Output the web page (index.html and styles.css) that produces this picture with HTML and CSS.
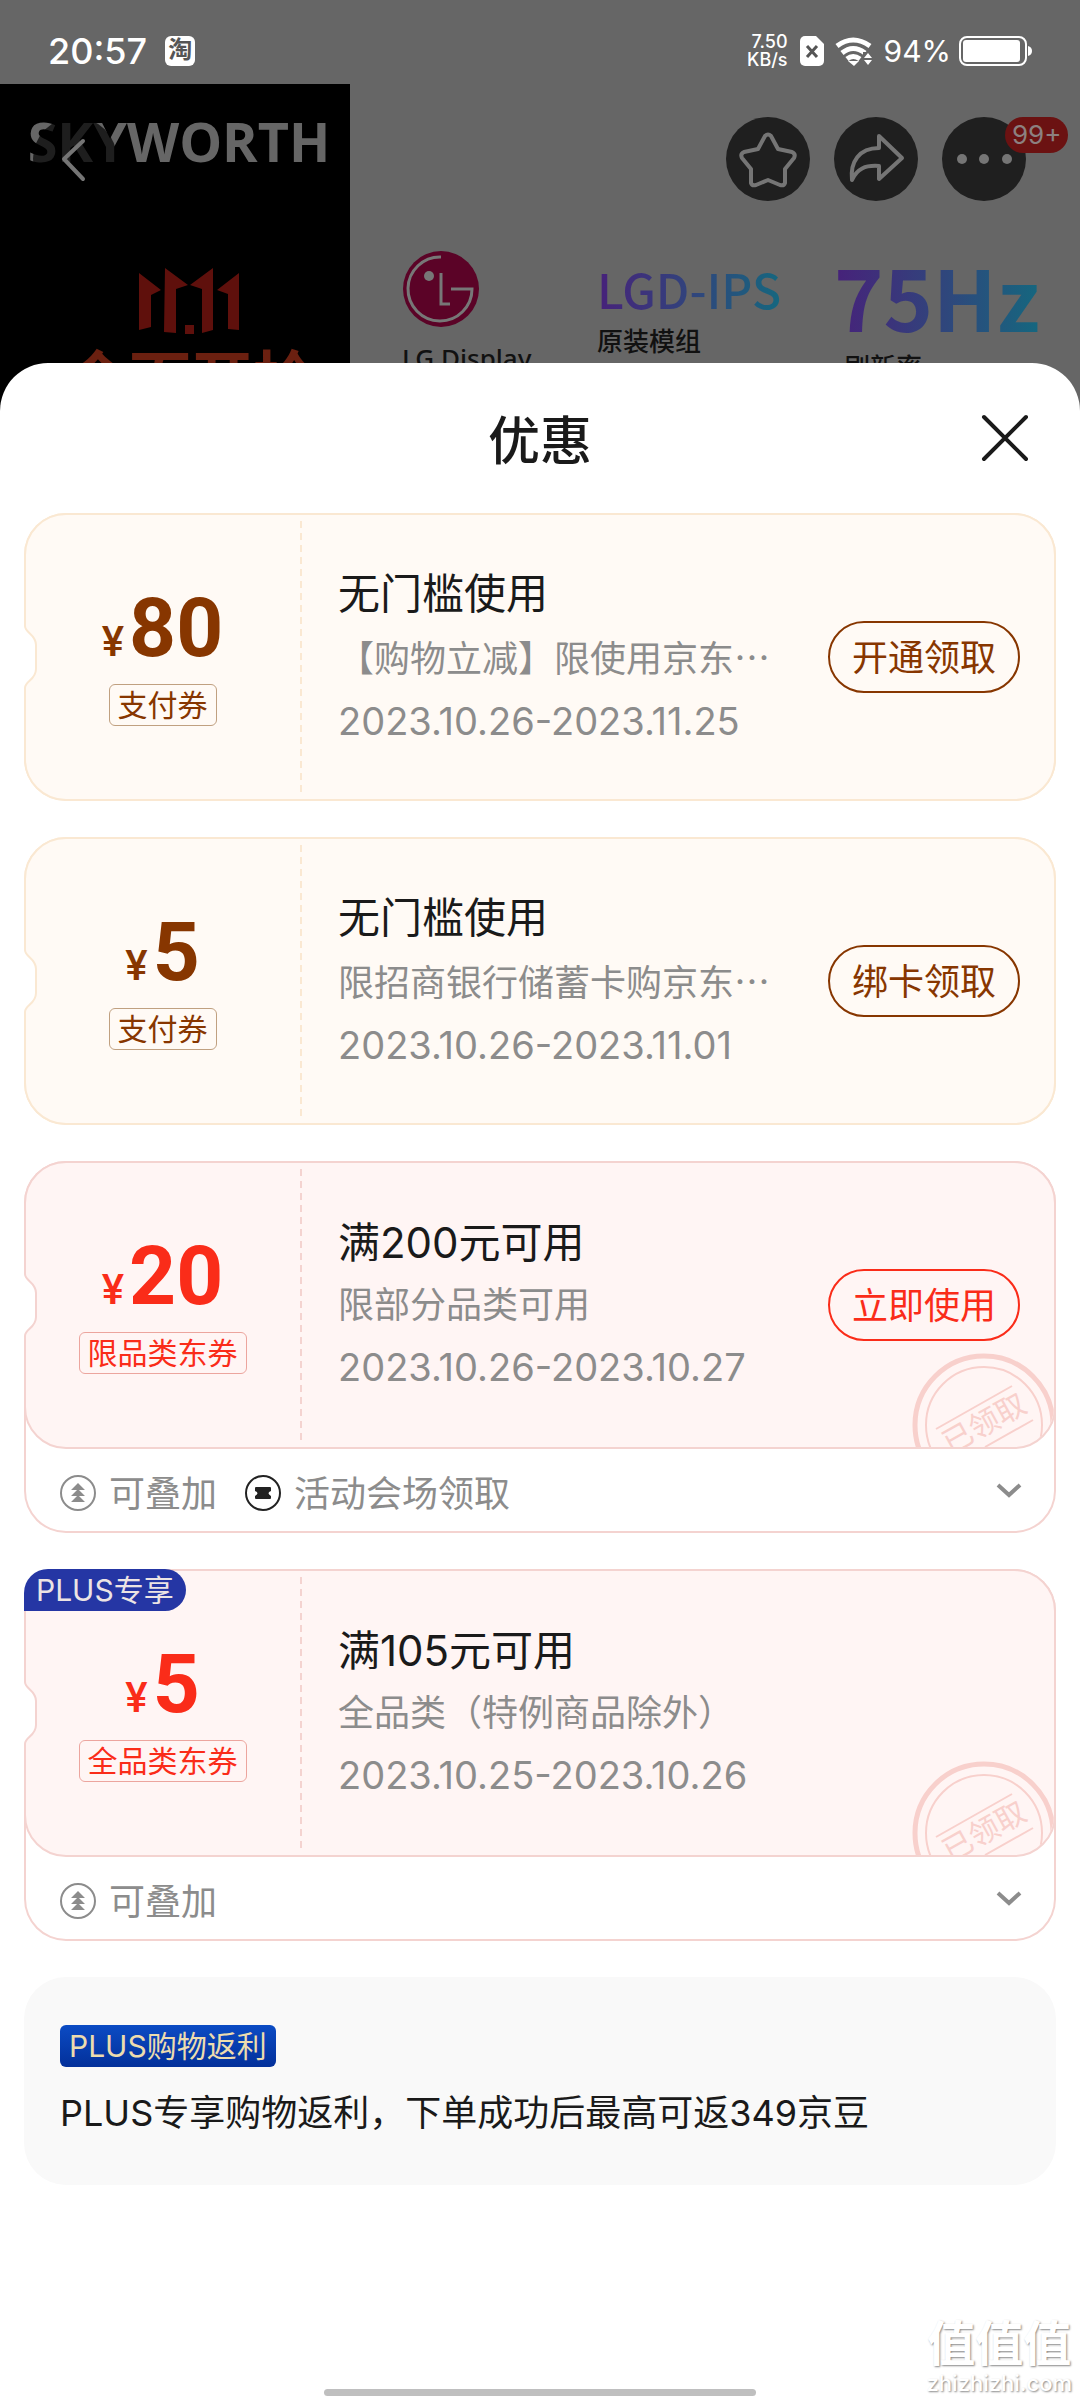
FILE: index.html
```html
<!DOCTYPE html>
<html lang="zh-CN">
<head>
<meta charset="utf-8">
<meta name="viewport" content="width=device-width, initial-scale=1">
<title>优惠</title>
<link rel="stylesheet" href="styles.css">
</head>
<body>
<svg class="defs" width="0" height="0" aria-hidden="true">
  <symbol id="notch" viewBox="0 0 14 62">
    <path d="M-2 0 L1 0 C1 7 12 8 12 19 V43 C12 54 1 55 1 62 L-2 62Z" fill="#fff"/>
    <path d="M1 0 C1 7 12 8 12 19 V43 C12 54 1 55 1 62" fill="none" stroke="currentColor" stroke-width="2"/>
  </symbol>
  <symbol id="stack" viewBox="0 0 36 36">
    <circle cx="18" cy="18" r="17" fill="none" stroke="currentColor" stroke-width="2"/>
    <path d="M18 8l7 7H11zM18 14l7 7H11zM18 20l7 7H11z" fill="currentColor"/>
  </symbol>
  <symbol id="chevron" viewBox="0 0 26 16">
    <path d="M2 2l11 10 11-10" fill="none" stroke="currentColor" stroke-width="4"/>
  </symbol>
  <symbol id="stamp" viewBox="0 0 144 94">
    <circle cx="72" cy="72" r="69" fill="none" stroke="currentColor" stroke-width="5"/>
    <circle cx="72" cy="72" r="58" fill="none" stroke="currentColor" stroke-width="2"/>
    <path d="M24 76L100 33M73 94L121 67" stroke="currentColor" stroke-width="2"/>
    <text x="-45" y="11" transform="translate(72 70) rotate(-29)" font-size="30" fill="currentColor">已领取</text>
  </symbol>
</svg>

<header class="hero">
  <div class="status">
    <time class="clock">20:57</time>
    <span class="app">淘</span>
    <span class="speed">7.50<br>KB/s</span>
    <svg class="sim" width="24" height="30" viewBox="0 0 24 30"><path d="M5 0h11l8 8v17a5 5 0 0 1-5 5H5a5 5 0 0 1-5-5V5a5 5 0 0 1 5-5z" fill="#fff"/><path d="M7 10l10 11M17 10L7 21" stroke="#555" stroke-width="3"/></svg>
    <svg class="wifi" width="38" height="30" viewBox="0 0 38 30"><g fill="none" stroke="#fff" stroke-width="5"><path d="M2 10Q18-2 35 10"/><path d="M7 17Q18 8 30 17"/><path d="M12 23Q18 18 25 23"/></g><path d="M13 25h11l-5 5z" fill="#fff"/><path d="M28 16h9v14h-9z" fill="#666"/><path d="M29 22l4-5 4 5zM29 24h8l-4 5z" fill="#fff"/></svg>
    <span class="percent">94%</span>
    <svg width="73" height="30" viewBox="0 0 73 30"><rect x="1" y="1" width="66" height="28" rx="7" fill="none" stroke="#fff" stroke-width="2"/><rect x="4" y="4" width="57" height="22" rx="3" fill="#fff"/><path d="M69 10q4 1 4 5t-4 5z" fill="#fff"/></svg>
  </div>
  <div class="banner">
    <div class="brand">
      <div class="brand-name">SKYWORTH</div>
      <svg class="sale-logo" width="102" height="68" viewBox="0 0 102 68" fill="#5f100c"><path d="M1 5L23 22 13 27V59L1 62ZM27 0L50 17 38 21V65L26 64ZM75 0L52 17 64 21V65L75 62ZM101 5L79 22 90 26V61L101 62ZM47 57h9v9h-9z"/></svg>
      <div class="sale-text">全面开抢</div>
    </div>
    <div class="feature feature-lg">
      <svg width="78" height="78" viewBox="0 0 78 78"><circle cx="39" cy="39" r="38" fill="#5b0327"/><path d="M39 7A32 32 0 1 0 70 39H49M39 23V54H48" fill="none" stroke="#777" stroke-width="3"/><circle cx="27" cy="26" r="5" fill="#777"/></svg>
      <div class="lg-name">LG Display</div>
    </div>
    <div class="feature feature-panel">
      <div class="panel-type">LGD-IPS</div>
      <div class="caption">原装模组</div>
    </div>
    <div class="feature feature-rate">
      <div class="rate">75Hz</div>
      <div class="caption">刷新率</div>
    </div>
  </div>
  <nav class="tools">
    <button class="round back" aria-label="返回"><svg width="84" height="84" viewBox="0 0 84 84"><path d="M50 24L31 42l19 20"/></svg></button>
    <button class="round" aria-label="收藏"><svg width="84" height="84" viewBox="0 0 84 84"><path d="M39 19q3-3 6 0l7 13 14 3q4 2 2 6l-9 11 0 14q-1 3-5 2l-12-5-12 5q-4 1-5-2l0-14-9-11q-2-4 2-6l14-3z"/></svg></button>
    <button class="round" aria-label="分享"><svg width="84" height="84" viewBox="0 0 84 84"><path d="M45 19L68 41 45 62V49C31 48 23 52 18 63C16 45 25 31 45 31Z"/></svg></button>
    <button class="round more" aria-label="更多"><svg width="84" height="84" viewBox="0 0 84 84"><g class="dots"><circle cx="20" cy="42" r="5"/><circle cx="42" cy="42" r="5"/><circle cx="65" cy="42" r="5"/></g></svg><span class="badge">99+</span></button>
  </nav>
</header>

<main class="sheet">
  <div class="sheet-head">
    <h1>优惠</h1>
    <button class="close" aria-label="关闭"><svg width="48" height="48" viewBox="0 0 48 48"><path d="M3 3l42 42M45 3L3 45" stroke="#1a1a1a" stroke-width="4" stroke-linecap="round"/></svg></button>
  </div>

  <section class="coupons">
    <article class="coupon pay">
      <div class="ticket">
        <div class="value"><p class="amount"><span>¥</span>80</p><span class="tag">支付券</span></div>
        <div class="info"><h2>无门槛使用</h2><p>【购物立减】限使用京东<span class="dotted">…</span></p><p class="dates">2023.10.26-2023.11.25</p></div>
        <button class="action">开通领取</button>
      </div>
      <svg class="notch" width="14" height="62"><use href="#notch"/></svg>
    </article>

    <article class="coupon pay">
      <div class="ticket">
        <div class="value"><p class="amount"><span>¥</span>5</p><span class="tag">支付券</span></div>
        <div class="info"><h2>无门槛使用</h2><p>限招商银行储蓄卡购京东<span class="dotted">…</span></p><p class="dates">2023.10.26-2023.11.01</p></div>
        <button class="action">绑卡领取</button>
      </div>
      <svg class="notch" width="14" height="62"><use href="#notch"/></svg>
    </article>

    <article class="coupon">
      <div class="ticket">
        <div class="value"><p class="amount"><span>¥</span>20</p><span class="tag">限品类东券</span></div>
        <div class="info"><h2>满200元可用</h2><p>限部分品类可用</p><p class="dates">2023.10.26-2023.10.27</p></div>
        <button class="action">立即使用</button>
        <svg class="stamp" width="144" height="94"><use href="#stamp"/></svg>
      </div>
      <div class="notes">
        <svg width="36" height="36"><use href="#stack"/></svg><span>可叠加</span>
        <svg class="venue" width="36" height="36" viewBox="0 0 36 36"><circle cx="18" cy="18" r="17" fill="none" stroke="#222" stroke-width="2"/><path d="M11 12h14q1 0 1 1v3q-5 2 0 5v2q0 1-1 1H11q-1 0-1-1v-2q5-3 0-5v-3q0-1 1-1z" fill="#222"/></svg><span>活动会场领取</span>
        <button class="expand" aria-label="展开"><svg width="26" height="16"><use href="#chevron"/></svg></button>
      </div>
      <svg class="notch" width="14" height="62"><use href="#notch"/></svg>
    </article>

    <article class="coupon">
      <div class="ticket">
        <div class="value"><p class="amount"><span>¥</span>5</p><span class="tag">全品类东券</span></div>
        <div class="info"><h2>满105元可用</h2><p>全品类（特例商品除外）</p><p class="dates">2023.10.25-2023.10.26</p></div>
        <svg class="stamp" width="144" height="94"><use href="#stamp"/></svg>
      </div>
      <div class="notes">
        <svg width="36" height="36"><use href="#stack"/></svg><span>可叠加</span>
        <button class="expand" aria-label="展开"><svg width="26" height="16"><use href="#chevron"/></svg></button>
      </div>
      <svg class="notch" width="14" height="62"><use href="#notch"/></svg>
      <span class="plus-flag">PLUS专享</span>
    </article>

    <article class="rebate">
      <span class="rebate-tag">PLUS购物返利</span>
      <p>PLUS专享购物返利，下单成功后最高可返349京豆</p>
    </article>
  </section>

  <div class="watermark"><strong>值值值</strong><span>zhizhizhi.com</span></div>
  <div class="home-bar"></div>
</main>
</body>
</html>
```
FILE: styles.css
```css
* { box-sizing: border-box; }
body {
  margin: 0;
  min-height: 100vh;
  display: flex;
  flex-direction: column;
  background: #fff;
  color: #1a1a1a;
  font-family: Inter, "Noto Sans CJK SC", sans-serif;
  font-size: 36px;
}
h1, h2, p { margin: 0; font-weight: 400; }
button { font: inherit; color: inherit; background: none; border: 0; padding: 0; }
svg { display: block; flex: none; }
.defs { position: absolute; }

/* Dimmed product page behind the sheet */
.hero {
  position: relative;
  height: 412px;
  overflow: hidden;
  background: #666;
}
.status {
  height: 84px;
  padding: 18px 48px 0;
  display: flex;
  align-items: center;
  color: #fff;
}
.clock { font-size: 36px; font-weight: 500; }
.app {
  width: 30px;
  height: 30px;
  margin: 0 auto 0 18px;
  border-radius: 6px;
  background: #fff;
  color: #555;
  font-size: 24px;
  font-weight: 700;
  line-height: 28px;
  text-align: center;
}
.speed { font-size: 18px; font-weight: 500; line-height: 18px; text-align: right; }
.sim { margin-left: 12px; }
.wifi { margin-left: 11px; }
.percent { margin: 0 8px 0 11px; font-size: 30px; line-height: 30px; }

.banner {
  height: 328px;
  display: grid;
  grid-template-columns: 350fr 247fr 237fr 246fr;
}
.brand {
  padding-top: 17px;
  display: flex;
  flex-direction: column;
  align-items: center;
  background: #000;
}
.brand-name {
  padding-left: 8px;
  color: #666;
  font: 700 54px/80px "Open Sans", sans-serif;
}
.sale-logo { margin: 87px 0 0 28px; }
.sale-text {
  padding-left: 32px;
  color: #6b2010;
  font: 700 62px/80px "Noto Sans CJK SC", sans-serif;
}
.feature { font-family: "Noto Sans CJK SC", sans-serif; color: #111; }
.feature-lg { padding: 166px 0 0 52px; }
.lg-name { margin-top: 8px; font: 500 26px/44px "Noto Sans", sans-serif; white-space: nowrap; }
.panel-type, .rate {
  width: max-content;
  background: linear-gradient(90deg, #47217a, #2f477c 55%, #15677f);
  background-clip: text;
  -webkit-background-clip: text;
  color: transparent;
}
.feature-panel { padding-top: 174px; }
.panel-type { font-size: 48px; font-weight: 500; line-height: 60px; }
.feature-rate { padding-top: 172px; }
.rate { font-size: 84px; font-weight: 700; line-height: 80px; }
.caption { font-size: 26px; font-weight: 500; line-height: 44px; }
.feature-rate .caption { padding: 8px 0 0 10px; }
.tools {
  position: absolute;
  top: 117px;
  left: 33px;
  right: 54px;
  display: flex;
  gap: 24px;
}
.round {
  position: relative;
  width: 84px;
  height: 84px;
  border-radius: 50%;
  background: #1f1f1f;
}
.round svg { fill: none; stroke: #757575; stroke-width: 4; stroke-linejoin: round; stroke-linecap: round; }
.round .dots { fill: #757575; stroke: none; }
.back { margin-right: auto; background: rgba(0, 0, 0, .7); }
.badge {
  position: absolute;
  left: 63px;
  top: 0;
  padding: 0 7px;
  border-radius: 18px;
  background: #6b1212;
  color: #8c8080;
  font-size: 26px;
  line-height: 36px;
}

/* Sheet */
.sheet {
  position: relative;
  flex: 1;
  margin-top: -49px;
  padding: 0 24px;
  border-radius: 48px 48px 0 0;
  background: #fff;
}
.sheet-head {
  height: 150px;
  display: grid;
  grid-template-columns: 1fr auto 1fr;
  align-items: center;
}
.sheet-head h1 { grid-column: 2; padding-top: 8px; font-size: 52px; font-weight: 500; line-height: 76px; }
.close { justify-self: end; margin-right: 27px; }
.coupons { display: flex; flex-direction: column; gap: 36px; }

.coupon {
  --ink: #fa2c19;
  --line: #f4d3d0;
  --fill: #fff5f4;
  --soft: #eca59e;
  position: relative;
  border-radius: 42px;
  box-shadow: inset 0 0 0 2px var(--line);
}
.coupon.pay { --ink: #873600; --line: #fae8d2; --fill: #fffaf5; --soft: #c0a080; }
.ticket {
  position: relative;
  height: 288px;
  display: flex;
  align-items: center;
  overflow: hidden;
  padding-right: 34px;
  border: 2px solid var(--line);
  border-radius: 42px;
  background: var(--fill);
}
.value {
  align-self: stretch;
  width: 276px;
  padding-right: 3px;
  display: flex;
  flex-direction: column;
  align-items: center;
  justify-content: center;
  gap: 16px;
  color: var(--ink);
  background: repeating-linear-gradient(var(--line) 0 7px, transparent 7px 12px) right / 2px 100% no-repeat;
  background-size: 2px calc(100% - 12px);
}
.amount {
  height: 80px;
  display: flex;
  align-items: baseline;
  gap: 5px;
  font: 700 82px/80px Roboto, sans-serif;
}
.amount span { font-size: 42px; font-weight: 500; line-height: 42px; }
.tag {
  padding: 0 8px;
  border: 1px solid var(--soft);
  border-radius: 6px;
  font-size: 30px;
  line-height: 40px;
}
.info { flex: 1; padding-left: 36px; color: #8c8c8c; line-height: 62px; white-space: nowrap; }
.info h2 { color: #1a1a1a; font-size: 42px; }
.info .dates { font-size: 38px; }
.dotted { font-family: "Noto Sans CJK SC", sans-serif; }
.action {
  width: 192px;
  height: 72px;
  padding-bottom: 4px;
  border: 2px solid var(--ink);
  border-radius: 36px;
  color: var(--ink);
}
.notch { position: absolute; left: 0; top: 113px; color: var(--line); }
.stamp {
  position: absolute;
  right: -2px;
  bottom: 0;
  color: #f8d0cc;
  font-family: "Noto Sans CJK SC", sans-serif;
}
.notes {
  height: 84px;
  padding: 4px 34px 0 36px;
  display: flex;
  align-items: center;
  gap: 13px;
  color: #8c8c8c;
}
.notes span { padding-bottom: 4px; }
.venue { margin-left: 15px; }
.expand { margin-left: auto; }
.expand svg { margin-bottom: 4px; }
.plus-flag {
  position: absolute;
  left: 0;
  top: 0;
  padding: 0 12px;
  border-radius: 24px 21px 21px 0;
  background: #2536a4;
  color: #ece4e4;
  font-size: 30px;
  line-height: 42px;
}
.rebate {
  padding: 48px 36px 46px;
  border-radius: 42px;
  background: #f9f9f9;
}
.rebate-tag {
  display: block;
  width: max-content;
  padding: 0 9px;
  border-radius: 6px;
  background: linear-gradient(#0b4bc4, #03309a);
  color: #ecdcae;
  font-size: 30px;
  line-height: 42px;
}
.rebate p { margin-top: 20px; line-height: 52px; }

.watermark {
  position: absolute;
  right: 8px;
  bottom: 4px;
  display: flex;
  flex-direction: column;
  align-items: center;
  color: #fff;
  font-size: 22px;
  font-weight: 500;
  line-height: 26px;
  text-shadow: 1px 1px 2px #888;
}
.watermark strong { font-size: 48px; font-weight: 700; line-height: 52px; }
.home-bar {
  position: absolute;
  left: 30%;
  right: 30%;
  bottom: 4px;
  height: 7px;
  border-radius: 4px;
  background: #bfbfbf;
}
```
